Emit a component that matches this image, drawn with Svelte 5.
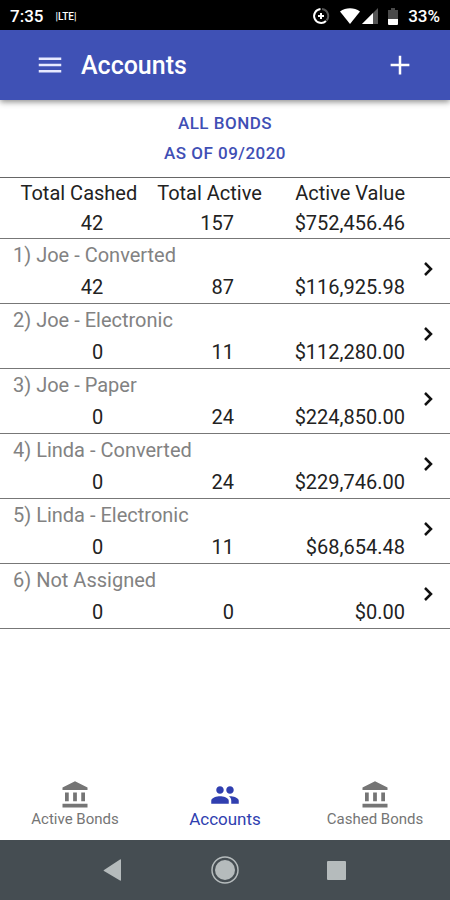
<script>
  const accounts = [
    { name: '1) Joe - Converted', cashed: 42, active: 87, value: '$116,925.98' },
    { name: '2) Joe - Electronic', cashed: 0, active: 11, value: '$112,280.00' },
    { name: '3) Joe - Paper', cashed: 0, active: 24, value: '$224,850.00' },
    { name: '4) Linda - Converted', cashed: 0, active: 24, value: '$229,746.00' },
    { name: '5) Linda - Electronic', cashed: 0, active: 11, value: '$68,654.48' },
    { name: '6) Not Assigned', cashed: 0, active: 0, value: '$0.00' }
  ];
  const tabs = [
    { label: 'Active Bonds', icon: 'bank' },
    { label: 'Accounts', icon: 'people' },
    { label: 'Cashed Bonds', icon: 'bank' }
  ];
  let current = $state('Accounts');
</script>

<div class="screen">
  <div class="status">
    <span class="time">7:35</span>
    <span class="lte">|LTE|</span>
    <span class="spacer"></span>
    <svg class="saver" width="18" height="18" viewBox="0 0 18 18" fill="none" stroke-width="2">
      <path d="M10 2a7 7 0 0 1 4.500 11.500" stroke="#555" />
      <path d="M8.500 2a7 7 0 1 0 5.500 12" stroke="#fff" />
      <path d="M9 6v6M6 9h6" stroke="#fff" />
    </svg>
    <svg class="wifi" width="20" height="16" viewBox="0 0 20 16" fill="#fff">
      <path d="M0 3.500C6-.8 14-.8 20 3.500L10 16z" />
    </svg>
    <svg class="signal" width="16" height="16" viewBox="0 0 16 16">
      <path d="M16 0v16H0z" fill="#555" />
      <path d="M11 5v11H0z" fill="#fff" />
    </svg>
    <svg class="battery" width="10" height="17" viewBox="0 0 10 17">
      <path d="M3 0h4v2h3v9H0V2h3z" fill="#4a4a4a" />
      <path d="M0 11h10v5a1 1 0 0 1-1 1H1a1 1 0 0 1-1-1z" fill="#fff" />
    </svg>
    <span class="percent">33%</span>
  </div>

  <header>
    <button class="icon" aria-label="Menu">
      <svg width="30" height="30" viewBox="0 0 24 24" fill="#e8eaff"><path d="M3 18h18v-2H3v2zm0-5h18v-2H3v2zm0-7v2h18V6H3z" /></svg>
    </button>
    <h1>Accounts</h1>
    <button class="icon" aria-label="Add account">
      <svg width="30" height="30" viewBox="0 0 24 24" fill="#fff"><path d="M19.500 13H13v6.500h-2V13H4.500v-2H11V4.500h2V11h6.500z" /></svg>
    </button>
  </header>

  <main>
    <div class="filters">
      <button>ALL BONDS</button>
      <button>AS OF 09/2020</button>
    </div>
    <table>
      <colgroup>
        <col class="c1" /><col class="c2" /><col class="c3" /><col class="c4" />
      </colgroup>
      <thead>
        <tr><th>Total Cashed</th><th>Total Active</th><th>Active Value</th><td></td></tr>
        <tr class="nums"><td>42</td><td>157</td><td>$752,456.46</td><td></td></tr>
      </thead>
      {#each accounts as a}
        <tbody>
          <tr>
            <th class="name" colspan="3" scope="rowgroup">{a.name}</th>
            <td class="go" rowspan="2">
              <button aria-label={`Open ${a.name}`}>
                <svg width="12" height="16" viewBox="0 0 12 16" fill="none" stroke="#111" stroke-width="2.500"><path d="M2 2l6 6-6 6" /></svg>
              </button>
            </td>
          </tr>
          <tr class="nums"><td>{a.cashed}</td><td>{a.active}</td><td>{a.value}</td></tr>
        </tbody>
      {/each}
    </table>
  </main>

  <nav class="tabs">
    {#each tabs as t}
      <button class:selected={current === t.label} onclick={() => (current = t.label)}>
        {#if t.icon === 'bank'}
          <svg width="30" height="30" viewBox="0 0 24 24" fill="currentColor"><path d="M4 10v7h3v-7H4zm6.500 0v7h3v-7h-3zM2 22h20v-3H2v3zm15-12v7h3v-7h-3zM12 1L2 6v2h20V6L12 1z" /></svg>
        {:else}
          <svg width="30" height="30" viewBox="0 0 24 24" fill="currentColor"><path d="M16 11c1.660 0 2.990-1.340 2.990-3S17.660 5 16 5c-1.660 0-3 1.340-3 3s1.340 3 3 3zm-8 0c1.660 0 2.990-1.340 2.990-3S9.660 5 8 5C6.340 5 5 6.340 5 8s1.340 3 3 3zm0 2c-2.330 0-7 1.170-7 3.500V19h14v-2.500c0-2.330-4.670-3.500-7-3.500zm8 0c-.29 0-.62.020-.97.050 1.160.84 1.970 1.970 1.970 3.450V19h6v-2.500c0-2.330-4.670-3.500-7-3.500z" /></svg>
        {/if}
        <span>{t.label}</span>
      </button>
    {/each}
  </nav>

  <div class="system">
    <button aria-label="Back">
      <svg width="30" height="30" viewBox="0 0 30 30" fill="#b5bbbc"><path d="M22 5v20q0 1-1 .500L5 16q-1-.5 0-1L21 4.500q1-.5 1 .500z" /></svg>
    </button>
    <button aria-label="Home">
      <svg width="30" height="30" viewBox="0 0 30 30"><circle cx="15" cy="15" r="13" fill="none" stroke="#b5bbbc" stroke-width="1.500" /><circle cx="15" cy="15" r="10" fill="#b5bbbc" /></svg>
    </button>
    <button aria-label="Recent apps">
      <svg width="30" height="30" viewBox="0 0 30 30" fill="#b5bbbc"><rect x="6" y="6" width="19" height="19" rx="1" /></svg>
    </button>
  </div>
</div>

<style>
  :global(body) {
    margin: 0;
    background: #fff;
  }
  .screen {
    display: flex;
    flex-direction: column;
    min-height: 100vh;
    font-family: Roboto, sans-serif;
    color: #222;
  }
  button {
    border: 0;
    padding: 0;
    background: none;
    font-family: inherit;
    color: inherit;
    cursor: pointer;
  }
  svg {
    display: block;
  }
  .status {
    display: flex;
    align-items: center;
    height: 30px;
    padding: 2px 10px 0;
    box-sizing: border-box;
    background: #000;
    color: #fff;
    font-size: 17px;
    font-weight: 500;
  }
  .lte {
    margin-left: 12px;
    font-size: 10px;
  }
  .spacer {
    flex: 1;
  }
  .wifi {
    margin-left: 10px;
  }
  .signal {
    margin-left: 2px;
  }
  .battery {
    margin: 0 10px;
  }
  header {
    display: flex;
    align-items: center;
    height: 70px;
    padding: 0 35px;
    background: #3f51b5;
    color: #fff;
    box-shadow: 0 2px 6px rgba(0, 0, 0, 0.45);
  }
  h1 {
    flex: 1;
    margin: 0 0 0 16px;
    font-size: 25px;
    font-weight: 500;
  }
  main {
    flex: 1;
  }
  .filters {
    display: flex;
    flex-direction: column;
    align-items: center;
    padding: 8px 0 9px;
  }
  .filters button {
    height: 30px;
    font-size: 17px;
    font-weight: 500;
    letter-spacing: 0.02857em;
    color: #3f4fb5;
  }
  table {
    width: 100%;
    table-layout: fixed;
    border-collapse: separate;
    border-spacing: 0;
    border-top: 1px solid #666;
    font-size: 20px;
  }
  .c1 {
    width: 30.5%;
  }
  .c2 {
    width: 27.7%;
  }
  .c4 {
    width: 10%;
  }
  th,
  td {
    height: 30px;
    padding: 0;
    text-align: right;
    font-weight: 400;
    line-height: 30px;
    white-space: nowrap;
  }
  tbody th {
    height: 33px;
    line-height: 33px;
  }
  tbody .nums td {
    height: 31px;
    vertical-align: top;
  }
  .nums td:nth-child(1) {
    padding-right: 34px;
  }
  .nums td:nth-child(2) {
    padding-right: 28px;
  }
  .nums td {
    border-bottom: 1px solid #777;
  }
  tbody .name {
    padding-left: 13px;
    text-align: left;
    color: #828282;
  }
  .go {
    border-bottom: 1px solid #777;
    vertical-align: top;
  }
  .go button {
    display: flex;
    align-items: center;
    width: 100%;
    height: 60px;
    padding-left: 18px;
  }
  .tabs {
    display: flex;
    height: 70px;
  }
  .tabs button {
    flex: 1;
    display: flex;
    flex-direction: column;
    align-items: center;
    padding-top: 10px;
    font-size: 15px;
    line-height: 18px;
    color: #757575;
  }
  .tabs .selected {
    font-size: 17px;
    color: #303fb0;
  }
  .system {
    display: flex;
    justify-content: center;
    align-items: center;
    gap: 81px;
    height: 60px;
    background: #454d52;
  }
</style>
